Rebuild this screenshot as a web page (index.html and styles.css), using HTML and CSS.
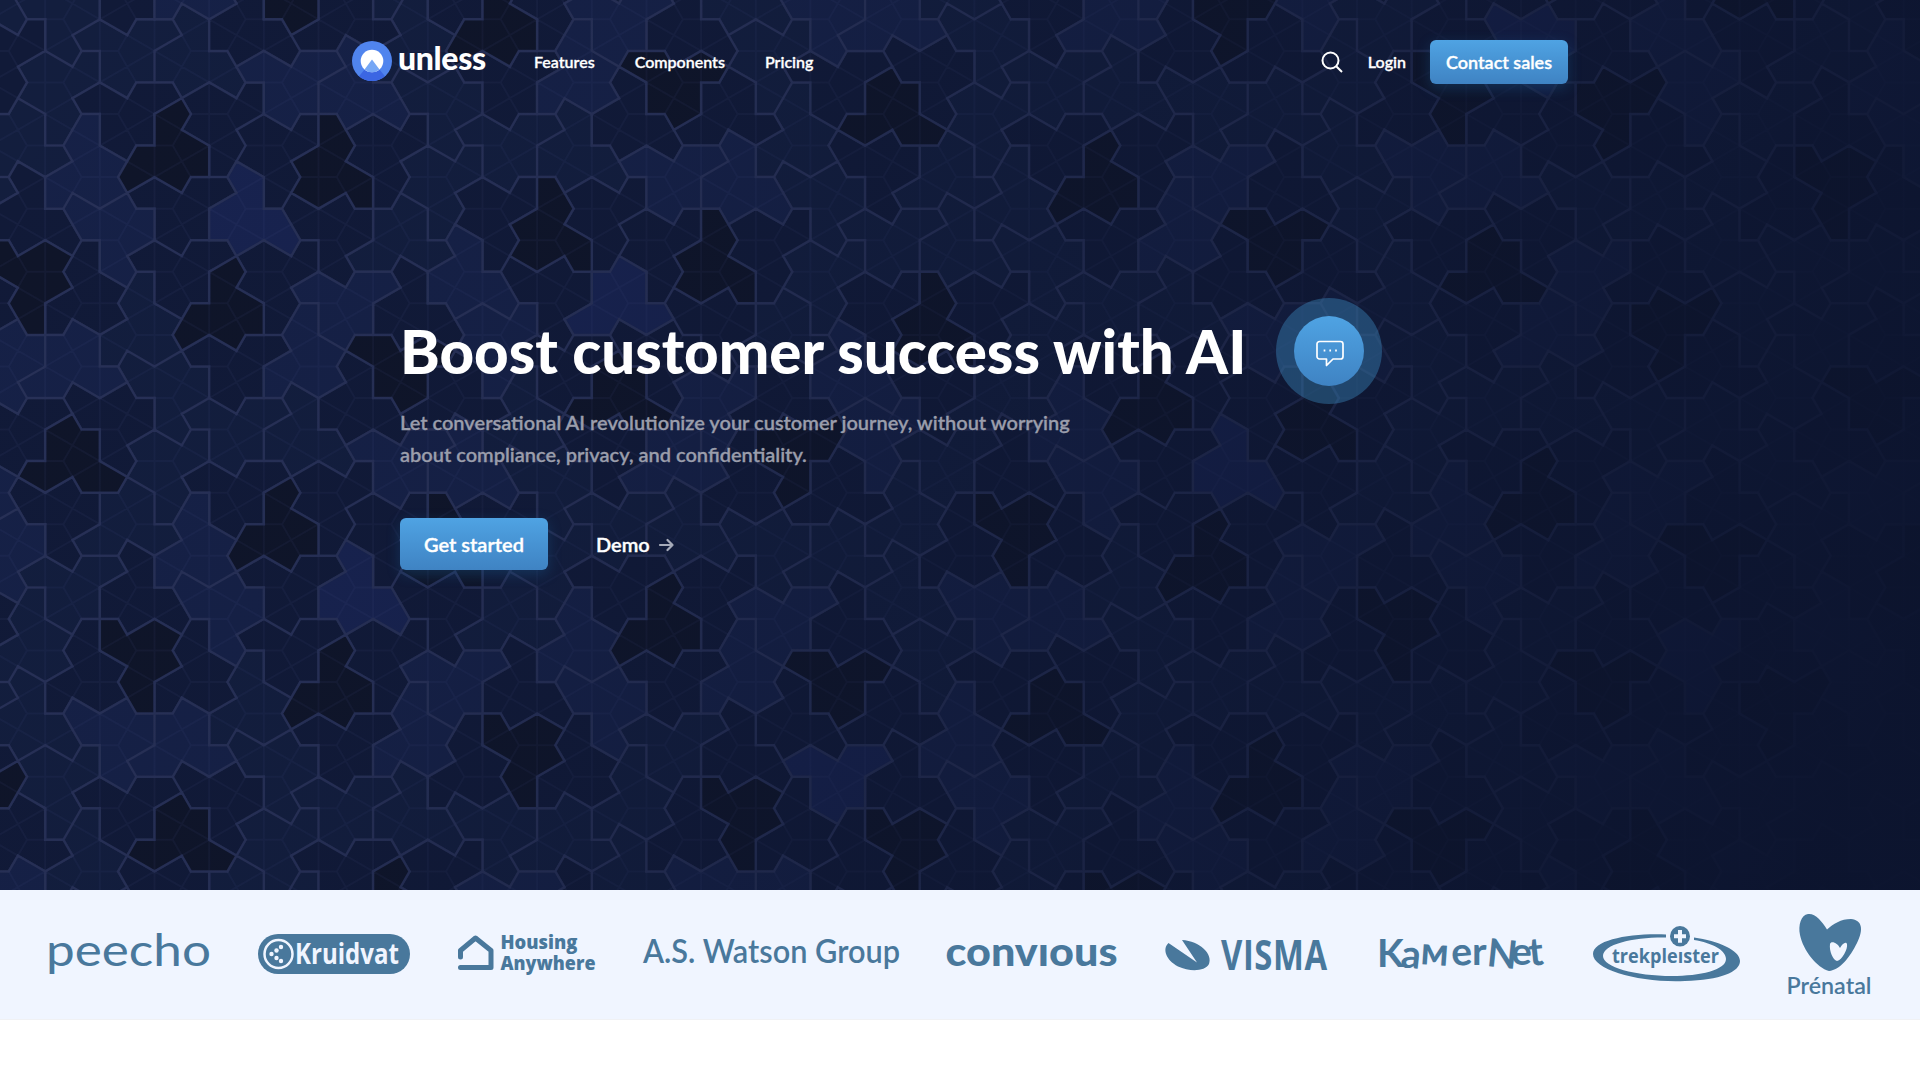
FILE: index.html
```html
<!DOCTYPE html>
<html lang="en">
<head>
<meta charset="utf-8">
<title>Unless</title>
<link rel="stylesheet" href="styles.css">
</head>
<body>
<section class="hero">
  <svg class="hero-pattern" id="pattern" width="1920" height="890" viewBox="0 0 1920 890" aria-hidden="true"></svg>
  <div class="hero-fade"></div>
  <header class="header">
    <a class="brand">
      <svg width="40" height="40" viewBox="0 0 40 40">
        <circle cx="20" cy="20" r="20" fill="#5084ee"/>
        <path d="M7 35.2 20 19.500 33 35.200A20 20 0 0 1 7 35.200Z" fill="#3b66e3"/>
        <circle cx="20" cy="20" r="11.300" fill="#fff"/>
        <path d="M12.500 28.500 20 18.500 27.500 28.500A11.300 11.300 0 0 1 12.500 28.500Z" fill="#76a7f5"/>
      </svg>
      <span class="brand-name">unless</span>
    </a>
    <nav class="nav"><a>Features</a><a>Components</a><a>Pricing</a></nav>
    <div class="actions">
      <svg width="22" height="22" viewBox="0 0 22 22" fill="none" stroke="#fff" stroke-width="2"><circle cx="9.500" cy="9.500" r="8"/><path d="M15.200 15.200 21 21"/></svg>
      <a class="login">Login</a>
      <a class="btn btn-small">Contact sales</a>
    </div>
  </header>
  <div class="intro">
    <div class="title-row">
      <h1>Boost customer success with AI</h1>
      <span class="chat"><span class="chat-inner">
        <svg width="28" height="28" viewBox="0 0 28 28" fill="none" stroke="#fff" stroke-width="1.700" stroke-linejoin="round"><path d="M3.500 1.500h21a2.500 2.500 0 0 1 2.500 2.500v12.500a2.500 2.500 0 0 1-2.500 2.500H17l-6.500 6.500V19h-7A2.500 2.500 0 0 1 1 16.500V4a2.500 2.500 0 0 1 2.500-2.500z"/><path d="M8.500 9.600v1.800M14.200 9.600v1.800M20 9.600v1.800"/></svg>
      </span></span>
    </div>
    <p class="lead">Let conversational AI revolutionize your customer journey, without worrying about compliance, privacy, and confidentiality.</p>
    <div class="cta">
      <a class="btn btn-large">Get started</a>
      <a class="demo">Demo
        <svg width="16" height="16" viewBox="0 0 16 16" fill="none" stroke="#a6abb9" stroke-width="2.200" stroke-linecap="round" stroke-linejoin="round"><path d="M2 9H14.500M9.500 4l5 5-5 5"/></svg>
      </a>
    </div>
  </div>
</section>
<section class="logos">
  <svg width="162" height="90" viewBox="48 910 162 90"><text class="thin" x="46" y="966" font-size="44" textLength="165" lengthAdjust="spacingAndGlyphs">peecho</text></svg>
  <svg width="152" height="90" viewBox="258 910 152 90">
    <rect x="258" y="934" width="152" height="40" rx="20"/>
    <circle class="ring" cx="278.500" cy="954" r="14"/>
    <g class="inv"><circle cx="281" cy="947" r="2.200"/><circle cx="276.500" cy="950.500" r="2.200"/><circle cx="271.500" cy="954" r="2.200"/><circle cx="276.500" cy="958" r="2.200"/><circle cx="281" cy="961" r="2.200"/></g>
    <text class="sans inv" x="295" y="964" font-size="28" textLength="104" lengthAdjust="spacingAndGlyphs">Kruidvat</text>
  </svg>
  <svg width="137" height="90" viewBox="458 910 137 90">
    <path class="line" d="M460.500 957V950.500L475.500 938 491 950.500V967.500H460.500"/>
    <text class="sans heavy small" x="500.500" y="949.300" textLength="77" lengthAdjust="spacingAndGlyphs">Housing</text>
    <text class="sans heavy small" x="500.500" y="970" textLength="95" lengthAdjust="spacingAndGlyphs">Anywhere</text>
  </svg>
  <svg width="256" height="90" viewBox="643 910 256 90"><text class="medium" x="643" y="963" font-size="32" textLength="257" lengthAdjust="spacingAndGlyphs">A.S. Watson Group</text></svg>
  <svg width="170" height="90" viewBox="947 910 170 90"><text class="bold" x="945.500" y="965.500" font-size="40" textLength="172" lengthAdjust="spacingAndGlyphs">convıous</text></svg>
  <svg width="165" height="90" viewBox="1165 910 165 90">
    <path d="M1168.500 943C1162 949 1166 960 1178 966.500C1190 972 1205 971.500 1209 964C1213 954 1200 941 1182 940L1197 962.500Z"/>
    <g transform="translate(1221 970) scale(.78 1)"><text class="sans" font-size="42" textLength="136" lengthAdjust="spacing">VISMA</text></g>
  </svg>
  <svg width="167" height="90" viewBox="1378 910 167 90"><text class="hand" x="1377 1400 1420 1452 1472 1486 1511 1530" y="967 967 964 966 965 966 965 966" rotate="0 6 4 -4 0 6 0 -6">KaмerNet</text></svg>
  <svg width="146" height="90" viewBox="1593 910 146 90">
    <path fill-rule="evenodd" d="M1666 934.500C1630 933 1593 940 1593 954C1593 970 1640 983 1685 981C1720 980 1740 972 1740 961C1740 950 1718 941 1694 937.500V940C1712 943 1726 950 1726 959C1726 970 1700 976 1672 976C1635 976 1603 967 1603 956C1603 944 1634 937 1666 937.500Z"/>
    <ellipse cx="1680" cy="936.300" rx="10" ry="10.300"/><path class="inv" d="M1678 930h4v4.300h4v4h-4v4.500h-4v-4.500h-4v-4h4z"/>
    <text class="sans" x="1612" y="962.500" font-size="19.500" textLength="107" lengthAdjust="spacingAndGlyphs">trekpleıster</text>
  </svg>
  <svg width="85" height="90" viewBox="1787 910 85 90">
    <path d="M1827 929.500C1822 921 1815 913 1808 914C1801 915 1798 925 1800 935C1803 950 1817 968 1829 971C1840 970 1850 957 1857 943C1864 929 1862 920 1851 919C1841 919 1833 924 1827 929.500Z"/>
    <path class="inv" d="M1840 948C1838 943 1831 940 1830 944C1829 951 1833 960 1837 961C1842 960 1848 949 1847 944C1846 941 1842 944 1840 948Z"/>
    <text class="medium" x="1786.500" y="993.500" font-size="22.500" textLength="85" lengthAdjust="spacingAndGlyphs">Prénatal</text>
  </svg>
</section>
<script src="pattern.js"></script>
</body>
</html>
```
FILE: styles.css
```css
* { box-sizing: border-box; }
body { margin: 0; background: #fff; font-family: Lato, "Liberation Sans", sans-serif; color: #fff; }
.hero { position: relative; height: 890px; background: #121a39; overflow: hidden; }
.hero-pattern, .hero-fade { position: absolute; inset: 0; }
.hero-fade { background: linear-gradient(118deg, rgba(12,20,46,0) 0%, rgba(12,20,46,.1) 30%, rgba(12,20,46,.45) 62%, rgba(12,20,46,.97) 95%); }
.kite-lines { fill: none; stroke: #4c568a; stroke-opacity: .11; stroke-width: 2; }
.tile { stroke: #252e52; stroke-width: 2.5; }
.tile-h1 { fill: #0f1529; }
.tile-h { fill: #111a38; }
.tile-t { fill: #182350; }
.tile-p { fill: #162147; }
.tile-f { fill: #131e3e; }
.header { position: relative; width: 1216px; margin: 0 auto; padding-top: 40px; display: flex; align-items: center; }
.brand { display: flex; align-items: center; gap: 6px; margin-top: -2px; }
.brand-name { width: 88px; font-size: 32px; font-weight: 900; line-height: 36px; letter-spacing: -.35px; padding-bottom: 6px; }
.nav { display: flex; gap: 40px; margin: -2px 0 0 48px; font-size: 16px; font-weight: 600; -webkit-text-stroke: .3px; }
.actions { display: flex; align-items: center; gap: 24px; margin-left: auto; font-size: 16px; font-weight: 600; }
.actions svg { margin-right: 1px; }
.login { margin-top: -1px; -webkit-text-stroke: .3px; }
.btn { display: block; border-radius: 6px; background: linear-gradient(#4fa3e3, #3f83c3); box-shadow: 0 4px 14px rgba(30,110,170,.3); color: #fff; text-align: center; font-weight: 600; -webkit-text-stroke: .35px; }
.btn-small { width: 138px; height: 44px; line-height: 44px; font-size: 18px; }
.btn-large { width: 148px; height: 52px; line-height: 53px; font-size: 20px; }
.intro { position: relative; margin-left: 400px; padding-top: 214px; }
.title-row { display: flex; align-items: center; gap: 30px; height: 106px; }
h1 { margin: 0; width: 846px; font-size: 60px; font-weight: 900; line-height: 60px; white-space: nowrap; }
.chat { width: 106px; height: 106px; border-radius: 50%; background: rgba(64,152,208,.37); display: grid; place-items: center; }
.chat-inner { width: 70px; height: 70px; border-radius: 50%; background: linear-gradient(#4fa3e3, #3f83c3); display: grid; place-items: center; padding: 5px 0 0 2px; }
.lead { margin: 2px 0 0; width: 700px; font-size: 20px; line-height: 32px; font-weight: 600; color: #9a9dab; -webkit-text-stroke: .3px; }
.cta { display: flex; align-items: center; gap: 48px; margin-top: 48px; }
.demo { display: flex; align-items: center; gap: 8px; font-size: 20px; font-weight: 600; -webkit-text-stroke: .35px; }
.logos { display: flex; justify-content: space-between; align-items: center; height: 130px; padding: 0 48px; background: #f0f5ff; border-bottom: 1px solid #f0f1f4; fill: #49789c; }
.logos svg { overflow: visible; }
.thin { font-weight: 400; }
.medium { font-weight: 600; }
.bold { font-weight: 900; }
.sans { font-family: "Open Sans", "Noto Sans", sans-serif; font-weight: 700; }
.heavy { font-weight: 800; }
.small { font-size: 18.500px; }
.hand { font-size: 39px; font-weight: 700; }
.inv { fill: #f0f5ff; }
.ring { fill: none; stroke: #f0f5ff; stroke-width: 2.500px; }
.line { fill: none; stroke: #49789c; stroke-width: 5px; stroke-linejoin: round; stroke-linecap: round; }
```
FILE: pattern.js
```js
// Hero background: aperiodic "hat" monotile patch built by metatile substitution.
const hr3 = Math.sqrt(3) / 2, PI = Math.PI;
const pt = (x, y) => ({ x, y });
const hexPt = (x, y) => pt(x + 0.5 * y, hr3 * y);
const inv = T => { const d = T[0]*T[4]-T[1]*T[3]; return [T[4]/d,-T[1]/d,(T[1]*T[5]-T[2]*T[4])/d,-T[3]/d,T[0]/d,(T[2]*T[3]-T[0]*T[5])/d]; };
const mul = (A, B) => [A[0]*B[0]+A[1]*B[3],A[0]*B[1]+A[1]*B[4],A[0]*B[2]+A[1]*B[5]+A[2],A[3]*B[0]+A[4]*B[3],A[3]*B[1]+A[4]*B[4],A[3]*B[2]+A[4]*B[5]+A[5]];
const add = (p, q) => pt(p.x+q.x, p.y+q.y), sub = (p, q) => pt(p.x-q.x, p.y-q.y);
const rot = a => [Math.cos(a),-Math.sin(a),0,Math.sin(a),Math.cos(a),0];
const trans = (x, y) => [1,0,x,0,1,y];
const rotAbout = (p, a) => mul(trans(p.x,p.y), mul(rot(a), trans(-p.x,-p.y)));
const apply = (M, P) => pt(M[0]*P.x+M[1]*P.y+M[2], M[3]*P.x+M[4]*P.y+M[5]);
const seg = (p, q) => [q.x-p.x,p.y-q.y,p.x,q.y-p.y,q.x-p.x,p.y];
const matchTwo = (a, b, c, d) => mul(seg(c,d), inv(seg(a,b)));
const intersect = (p1, q1, p2, q2) => {
  const d = (q2.y-p2.y)*(q1.x-p1.x)-(q2.x-p2.x)*(q1.y-p1.y);
  const u = ((q2.x-p2.x)*(p1.y-p2.y)-(q2.y-p2.y)*(p1.x-p2.x))/d;
  return pt(p1.x+u*(q1.x-p1.x), p1.y+u*(q1.y-p1.y));
};
const hat = [[0,0],[-1,-1],[0,-2],[2,-2],[2,-1],[4,-2],[5,-1],[4,0],[3,0],[2,2],[0,3],[0,2],[-1,2]].map(a => hexPt(a[0], a[1]));

class Meta {
  constructor(shape) { this.shape = shape; this.kids = []; }
  add(T, g) { this.kids.push({ T, g }); return this; }
  ev(n, i) { return apply(this.kids[n].T, this.kids[n].g.shape[i]); }
  recentre() {
    const s = this.shape.reduce(add, pt(0, 0)), n = this.shape.length, c = pt(s.x/n, s.y/n);
    this.shape = this.shape.map(p => sub(p, c));
    const M = trans(-c.x, -c.y);
    this.kids.forEach(k => { k.T = mul(M, k.T); });
    return this;
  }
}

function base() {
  const o = [pt(0,0),pt(4,0),pt(4.5,hr3),pt(2.5,5*hr3),pt(1.5,5*hr3),pt(-0.5,hr3)];
  const H = new Meta(o)
    .add(matchTwo(hat[5],hat[7],o[5],o[0]), 'h')
    .add(matchTwo(hat[9],hat[11],o[1],o[2]), 'h')
    .add(matchTwo(hat[5],hat[7],o[3],o[4]), 'h')
    .add(mul(trans(2.5,hr3), mul([-0.5,-hr3,0,hr3,-0.5,0],[0.5,0,0,0,-0.5,0])), 'h1');
  const T = new Meta([pt(0,0),pt(3,0),pt(1.5,3*hr3)]).add([0.5,0,0.5,0,0.5,hr3], 't');
  const second = mul(trans(0,2*hr3), mul([0.5,hr3,0,-hr3,0.5,0],[0.5,0,0,0,0.5,0]));
  const P = new Meta([pt(0,0),pt(4,0),pt(3,2*hr3),pt(-1,2*hr3)]).add([0.5,0,1.5,0,0.5,hr3], 'p').add(second, 'p');
  const F = new Meta([pt(0,0),pt(3,0),pt(3.5,hr3),pt(3,2*hr3),pt(-1,2*hr3)]).add([0.5,0,1.5,0,0.5,hr3], 'f').add(second, 'f');
  return { H, T, P, F };
}

const rules = [['H'],[0,0,'P',2],[1,0,'H',2],[2,0,'P',2],[3,0,'H',2],[4,4,'P',2],[0,4,'F',3],[2,4,'F',3],[4,1,3,2,'F',0],[8,3,'H',0],[9,2,'P',0],[10,2,'H',0],[11,4,'P',2],[12,0,'H',2],[13,0,'F',3],[14,2,'F',1],[15,3,'H',4],[8,2,'F',1],[17,3,'H',0],[18,2,'P',0],[19,2,'H',2],[20,4,'F',3],[20,0,'P',2],[22,0,'H',2],[23,4,'F',3],[23,0,'F',3],[16,0,'P',2],[9,4,0,2,'T',2],[4,0,'F',3]];

function grow(s) {
  const r = new Meta([]);
  for (const q of rules) {
    if (q.length === 1) { r.add([1,0,0,0,1,0], s.H); continue; }
    let P, Q, n, i;
    if (q.length === 4) {
      const m = r.kids[q[0]].g.shape.length;
      P = r.ev(q[0], (q[1]+1)%m); Q = r.ev(q[0], q[1]); n = s[q[2]]; i = q[3];
    } else {
      P = r.ev(q[2], q[3]); Q = r.ev(q[0], q[1]); n = s[q[4]]; i = q[5];
    }
    r.add(matchTwo(n.shape[i], n.shape[(i+1)%n.shape.length], P, Q), n);
  }
  const b1 = r.ev(8,2), b2 = r.ev(21,2), rb = apply(rotAbout(b1,-2*PI/3), b2), p72 = r.ev(7,2), p252 = r.ev(25,2);
  const llc = intersect(b1, rb, r.ev(6,2), p72);
  let w = sub(r.ev(6,2), llc);
  const o = [llc, b1];
  w = apply(rot(-PI/3), w); o.push(add(b1, w)); o.push(r.ev(14,2));
  w = apply(rot(-PI/3), w); o.push(sub(o[3], w)); o.push(r.ev(6,2));
  const A = o[2], B = add(o[1], sub(o[4], o[5])), C = apply(rotAbout(B,-PI/3), A);
  const make = (shape, ks) => { const m = new Meta(shape); ks.forEach(k => m.add(r.kids[k].T, r.kids[k].g)); return m.recentre(); };
  return {
    H: make(o, [0,9,16,27,26,6,1,8,10,15]),
    P: make([p72, add(p72, sub(b1,llc)), b1, llc], [7,2,3,4,28]),
    F: make([b2, r.ev(24,2), r.ev(25,0), p252, add(p252, sub(llc,b1))], [21,20,22,23,24,25]),
    T: make([B, C, A], [11])
  };
}

const U = 36.44;
const view = mul([U,0,3361.225,0,U,-454.05], mul(rot(PI/3), [1,0,0,0,-1,0]));
let shapes = base();
for (let i = 0; i < 5; i++) shapes = grow(shapes);

const d = { f: '', h: '', p: '', t: '', h1: '' };
(function walk(m, T) {
  for (const k of m.kids) {
    const M = mul(T, k.T);
    if (typeof k.g !== 'string') { walk(k.g, M); continue; }
    if (M[2] < -150 || M[2] > 2070 || M[5] < -150 || M[5] > 1040) continue;
    d[k.g] += 'M' + hat.map(p => { const q = apply(M, p); return q.x.toFixed(1) + ' ' + q.y.toFixed(1); }).join('L') + 'Z';
  }
})(shapes.H, view);

// Faint hexagon and kite construction lines on the same lattice.
let g = '';
const polar = (x, y, a, r) => (x + Math.cos(a)*r).toFixed(1) + ' ' + (y + Math.sin(a)*r).toFixed(1);
for (let i = -1; i < 37; i++) for (let j = -1; j < 16; j++) {
  const x = 45.19 + i*U*1.5, y = 50.88 + j*U*2*hr3 + (i & 1 ? U*hr3 : 0);
  for (let a = 0; a < 6; a++) {
    g += `M${x.toFixed(1)} ${y.toFixed(1)}L${polar(x, y, a*PI/3+PI/6, U*hr3)}`;
    if (a < 3) g += `M${polar(x, y, a*PI/3, U)}L${polar(x, y, (a+1)*PI/3, U)}`;
  }
}
document.getElementById('pattern').innerHTML =
  Object.keys(d).map(t => `<path class="tile tile-${t}" d="${d[t]}"/>`).join('') + `<path class="kite-lines" d="${g}"/>`;
```
